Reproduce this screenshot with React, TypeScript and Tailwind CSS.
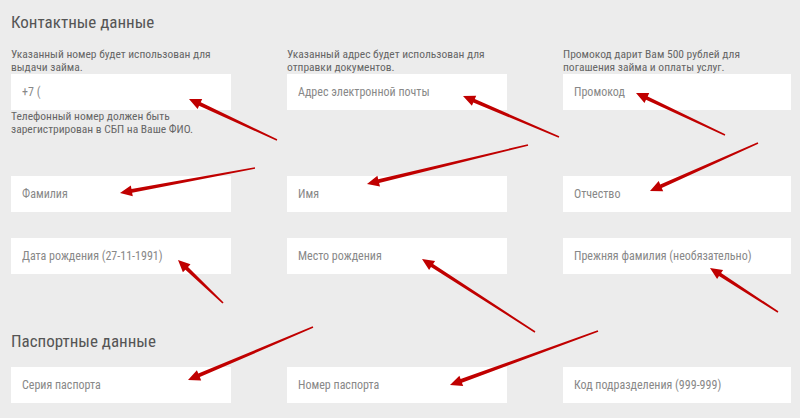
import React from "react"

type Pt = [number, number]

const arrows: [Pt, Pt][] = [
  [[277, 140], [189, 99]],
  [[559, 137], [463, 96]],
  [[725, 135], [636, 93]],
  [[255, 168], [120, 193]],
  [[528, 145], [367, 184]],
  [[758, 143], [650, 191]],
  [[223, 303], [178, 260]],
  [[535, 332], [422, 259]],
  [[778, 312], [710, 268]],
  [[313, 327], [188, 380]],
  [[598, 331], [450, 385]],
]

function arrowPoints(tail: Pt, head: Pt) {
  const dx = head[0] - tail[0]
  const dy = head[1] - tail[1]
  const len = Math.hypot(dx, dy)
  const ux = dx / len
  const uy = dy / len
  const nx = -uy
  const ny = ux
  const headLen = 12
  const bx = head[0] - ux * headLen
  const by = head[1] - uy * headLen
  const p = (x: number, y: number, w: number) => [
    [x + nx * w, y + ny * w],
    [x - nx * w, y - ny * w],
  ]
  const [t1, t2] = p(tail[0], tail[1], 0.8)
  const [b1, b2] = p(bx, by, 1.9)
  const [h1, h2] = p(bx, by, 5.5)
  const pts = [t1, b1, h1, head, h2, b2, t2]
  return pts.map((q) => q.map((v) => v.toFixed(1)).join(",")).join(" ")
}

function Field({ placeholder }: { placeholder: string }) {
  return (
    <input
      readOnly
      placeholder={placeholder}
      className="h-[36px] w-full bg-white px-[11px] text-[12px] text-[#777] placeholder:text-[#888] outline-none"
    />
  )
}

function Hint({ children }: { children: React.ReactNode }) {
  return <p className="text-[11.5px] leading-[13px] text-[#666]">{children}</p>
}

export default function App() {
  return (
    <div
      className="relative h-[418px] w-[800px] overflow-hidden bg-[#ececec] px-[11px]"
      style={{ fontFamily: "'Liberation Sans Narrow', 'Roboto Condensed', Roboto, sans-serif" }}
    >
      <h2 className="pt-[10px] text-[17px] leading-[24px] text-[#555]">Контактные данные</h2>

      <div className="mt-[14px] grid grid-cols-[220px_220px_228px] gap-x-[56px]">
        <div>
          <Hint>
            Указанный номер будет использован для
            <br />
            выдачи займа.
          </Hint>
          <Field placeholder="+7 (" />
          <Hint>
            Телефонный номер должен быть
            <br />
            зарегистрирован в СБП на Ваше ФИО.
          </Hint>
        </div>
        <div>
          <Hint>
            Указанный адрес будет использован для
            <br />
            отправки документов.
          </Hint>
          <Field placeholder="Адрес электронной почты" />
        </div>
        <div>
          <Hint>
            Промокод дарит Вам 500 рублей для
            <br />
            погашения займа и оплаты услуг.
          </Hint>
          <Field placeholder="Промокод" />
        </div>
      </div>

      <div className="mt-[40px] grid grid-cols-[220px_220px_228px] gap-x-[56px] gap-y-[27px]">
        <div className="h-[35px]"><Field placeholder="Фамилия" /></div>
        <div className="h-[35px]"><Field placeholder="Имя" /></div>
        <div className="h-[35px]"><Field placeholder="Отчество" /></div>
        <div className="h-[35px]"><Field placeholder="Дата рождения (27-11-1991)" /></div>
        <div className="h-[35px]"><Field placeholder="Место рождения" /></div>
        <div className="h-[35px]"><Field placeholder="Прежняя фамилия (необязательно)" /></div>
      </div>

      <h2 className="mt-[56px] text-[17px] leading-[24px] text-[#555]">Паспортные данные</h2>

      <div className="mt-[14px] grid grid-cols-[220px_220px_228px] gap-x-[56px]">
        <Field placeholder="Серия паспорта" />
        <Field placeholder="Номер паспорта" />
        <Field placeholder="Код подразделения (999-999)" />
      </div>

      <svg className="pointer-events-none absolute left-0 top-0" width="800" height="418">
        {arrows.map(([t, h], i) => (
          <polygon key={i} points={arrowPoints(t, h)} fill="#c00000" />
        ))}
      </svg>
    </div>
  )
}
